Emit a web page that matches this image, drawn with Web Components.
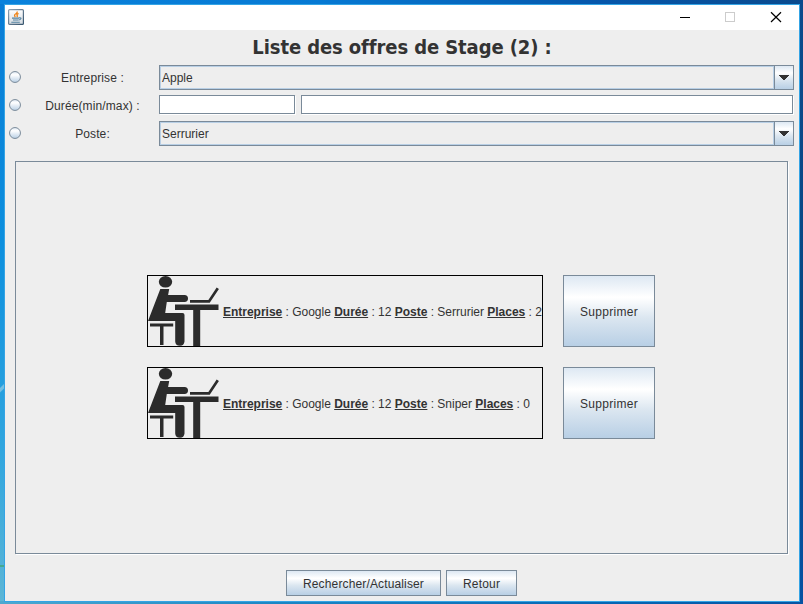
<!DOCTYPE html>
<html lang="fr"><head><meta charset="utf-8"><title>Offres de stage</title>
<style>
html,body{margin:0;width:803px;height:604px;overflow:hidden}
body{font:12px/14px "Liberation Sans",Arial,sans-serif;color:#333}
</style></head><body>
<stage-desktop></stage-desktop>
<script>
const define=(name,html,setup)=>customElements.define(name,class extends HTMLElement{
  constructor(){super();this.attachShadow({mode:'open'}).innerHTML='<style>*{box-sizing:border-box}</style>'+html;}
  connectedCallback(){if(setup)setup(this,this.shadowRoot);}
});

define('swing-button',`<style>
:host{display:flex;box-sizing:border-box;align-items:center;justify-content:center;border:1px solid #7a8a99;background:linear-gradient(#dde8f3,#fff 30%,#fff 31%,#dbe6f0 60%,#b8cfe5);white-space:nowrap}
</style><slot></slot>`);

define('swing-combo',`<style>
:host{display:flex;box-sizing:border-box;height:25px;border:1px solid #7a8a99;background:#eee}
.v{flex:1;border:1px solid #b8cfe5;padding:4px 0 0 1px}
.a{width:19px;border-left:1px solid #7a8a99;background:linear-gradient(#dde8f3,#fff 30%,#dbe6f0 60%,#b8cfe5);display:flex;align-items:center;justify-content:center}
svg{display:block}
</style><div class="v"><slot></slot></div><div class="a"><svg width="10" height="5" shape-rendering="crispEdges"><path d="M0 0H10V1H9V2H8V3H7V4H6V5H4V4H3V3H2V2H1V1H0Z" fill="#333"/></svg></div>`);

define('swing-field',`<style>
:host{display:block;box-sizing:border-box;height:19px;background:#fff;border:1px solid #7a8a99;box-shadow:1px 1px 0 #fff}
</style>`);

define('swing-radio',`<style>:host{display:block;width:12px;height:12px}svg{display:block}</style>
<svg width="12" height="12"><defs><linearGradient id="g" x1="0" x2="0" y1="0" y2="1"><stop offset="0" stop-color="#dde8f3"/><stop offset=".3" stop-color="#fff"/><stop offset="1" stop-color="#b8cfe5"/></linearGradient></defs><circle cx="6" cy="6" r="5.45" fill="url(#g)" stroke="#7a8a99"/></svg>`);

define('filter-row',`<style>
:host{display:grid;grid-template-columns:12px 1fr 635px;align-items:center;height:25px;margin:0 5px 3px 4px}
swing-radio{margin-bottom:1px}
.l{text-align:center;padding-left:5px;letter-spacing:.12px}
</style><swing-radio></swing-radio><div class="l"><slot name="label"></slot></div><slot></slot>`);

define('desk-icon',`<style>:host{display:block;width:71px;height:70px}svg{display:block}</style>
<svg width="71" height="70" viewBox="0 0 71 70" fill="#2b2b2b">
<ellipse cx="17.5" cy="5.8" rx="6.7" ry="5.8"/>
<path d="M12.3 13H21.2L20.1 19H36.5Q40 19.4 40 22.5Q40 25.8 36.5 26H18.8L17.2 37H34.5Q36.5 37 36.5 39V65.5Q36 69.7 32 69.7Q27.4 69.7 27.2 65.5V45H0Z"/>
<path d="M2 47.6H25.2V50.4H15.5V69H12V50.4H2ZM27 28.4H70.5V34H52.2V70H45.2V34H27Z"/>
<path d="M42 25.4H61L69.8 12.2" fill="none" stroke="#2b2b2b" stroke-width="2.7"/></svg>`);

define('offer-card',`<style>
:host{display:flex;box-sizing:border-box;width:396px;height:72px;border:1px solid #000;align-items:center;overflow:hidden;white-space:nowrap}
.t{margin-left:4px;margin-top:2px;letter-spacing:-.012px}
b{text-decoration:underline;text-decoration-thickness:1px;text-underline-offset:1px}
</style><desk-icon></desk-icon><div class="t"><b>Entreprise</b> : <span id="e"></span> <b>Durée</b> : <span id="d"></span> <b>Poste</b> : <span id="p"></span> <b>Places</b> : <span id="n"></span></div>`,
(h,r)=>{for(const [k,a] of [['e','company'],['d','duration'],['p','job'],['n','places']])r.getElementById(k).textContent=h.getAttribute(a);});

define('offer-row',`<style>:host{display:flex;gap:20px;height:72px}swing-button{width:92px;letter-spacing:.3px;padding-top:1px}</style><slot></slot><swing-button>Supprimer</swing-button>`);

define('java-icon',`<style>:host{display:block;width:16px;height:16px}svg{display:block}</style>
<svg width="16" height="16"><defs><linearGradient id="j" x1="0" x2="1" y1="0" y2="1"><stop stop-color="#8fa2b3"/><stop offset="1" stop-color="#36546d"/></linearGradient><linearGradient id="k" x1="0" x2="0" y1="0" y2="1"><stop stop-color="#fff"/><stop offset="1" stop-color="#d3d9df"/></linearGradient></defs><rect x=".6" y=".6" width="14.8" height="14.8" rx="1" fill="url(#k)" stroke="url(#j)" stroke-width="1.2"/>
<path d="M9.3 2.5Q9.5 4 7.6 5Q5.7 6 7.3 8M10.6 4.5Q8.2 5.5 9.2 6.4Q9.8 7.2 8.8 8.1" fill="none" stroke="#ef8214" stroke-width="1.3"/>
<path d="M4 9.1H11M5 11H10.5M11 8.9Q13.6 8.4 12.8 9.8Q12.2 10.9 10.8 11M3.3 13.3H11.8" fill="none" stroke="#5382a1" stroke-width="1.1"/></svg>`);

define('title-bar',`<style>
:host{display:flex;height:25px;background:#fff;align-items:flex-start;justify-content:space-between}
java-icon{margin:4px 0 0 3px}svg{display:block}
</style><java-icon></java-icon><svg width="126" height="25"><path d="M7 12.5H17" stroke="#000"/><rect x="52.5" y="7.5" width="9" height="9" fill="none" stroke="#ccc"/><path d="M98 7.2L108 17M108 7.2L98 17" stroke="#000" stroke-width="1.2"/></svg>`);

define('stage-desktop',`<style>
:host{display:block;width:803px;height:604px;overflow:hidden;padding:4px 3px 2px 4px;box-sizing:border-box;background:
linear-gradient(90deg,#4ea9cf,#1a86c4 35%,#0566b4 75%,#0653a3) 0 100%/100% 3px no-repeat,
linear-gradient(90deg,#0a82dc,#0679d3 40%,#0656aa 75%,#0a4a8d) 0 0/100% 4px no-repeat,
linear-gradient(#0c4a8c,#084784 50%,#0651a2) 100% 0/4px 100% no-repeat,
linear-gradient(135deg,transparent 0 35%,#73bfe3 45% 65%,transparent 75%) 0 382px/4px 11px no-repeat,
linear-gradient(#46a98f,#46a98f) 0 565px/4px 2px no-repeat,
linear-gradient(#087bd5,#0c8fde 40%,#31a6de 75%,#5db6d6)}
.w{width:796px;height:598px;border:1px solid #34a4e5;background:#eee;display:flex;flex-direction:column}
h1{margin:0;height:35px;font:bold 20px/35px "DejaVu Sans Condensed","DejaVu Sans",sans-serif;font-stretch:condensed;text-align:center;white-space:nowrap;letter-spacing:-.1px}
.f{display:grid;grid-template-columns:136px 492px;gap:6px;padding-bottom:2px}
.p{width:773px;height:393px;margin:12px 0 0 10px;border:1px solid #7a8a99;box-shadow:1px 1px 0 #fff;display:flex;flex-direction:column;gap:20px;padding:113px 0 0 131px}
.b{display:flex;gap:5px;margin:16px 0 0 281px}
.b swing-button{height:26px;padding-top:1px;letter-spacing:.14px}
</style><div class="w"><title-bar></title-bar><h1><span>Liste des offres de Stage (2) :</span></h1>
<filter-row><span slot="label">Entreprise :</span><swing-combo>Apple</swing-combo></filter-row>
<filter-row><span slot="label">Durée(min/max) :</span><div class="f"><swing-field></swing-field><swing-field></swing-field></div></filter-row>
<filter-row><span slot="label">Poste:</span><swing-combo>Serrurier</swing-combo></filter-row>
<div class="p"><offer-row><offer-card company="Google" duration="12" job="Serrurier" places="2"></offer-card></offer-row>
<offer-row><offer-card company="Google" duration="12" job="Sniper" places="0"></offer-card></offer-row></div>
<div class="b"><swing-button style="width:155px">Rechercher/Actualiser</swing-button><swing-button style="width:71px;letter-spacing:.2px">Retour</swing-button></div></div>`);
</script></body></html>
